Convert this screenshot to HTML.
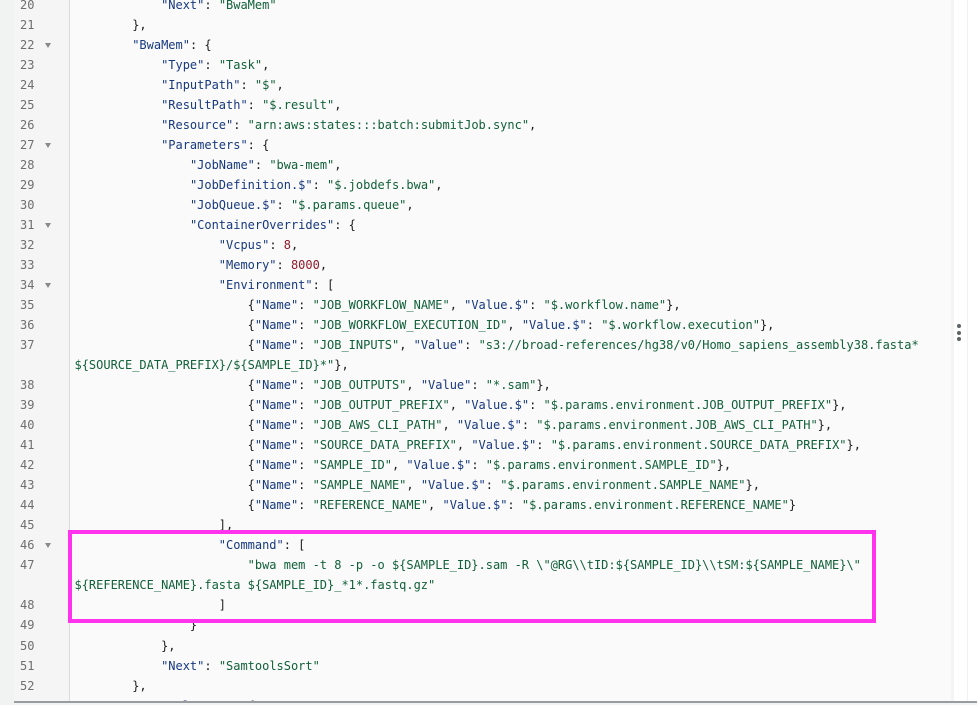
<!DOCTYPE html>
<html>
<head>
<meta charset="utf-8">
<style>
html,body{margin:0;padding:0;background:#fff;}
#page{position:relative;width:977px;height:705px;overflow:hidden;background:#f1f3f3;}
#white{position:absolute;left:953px;top:0;width:14px;height:701px;background:#fff;}
#rail{position:absolute;left:951px;top:0;width:3px;height:701px;background:#f4f4f4;}
#rail2{position:absolute;left:967px;top:0;width:1px;height:701px;background:#f1f1f1;}
#right{position:absolute;left:968px;top:0;width:9px;height:701px;background:#fff;}
#ed{position:absolute;left:14px;top:0;width:937px;height:701px;background:#fafafa;overflow:hidden;}
#gut{position:absolute;left:0;top:0;width:55px;height:701px;background:#f5f5f5;border-right:1px solid #dcdcdc;}
#code{position:absolute;left:0;top:-5px;width:937px;font:12px/20px "DejaVu Sans Mono","Liberation Mono",monospace;color:#1c1c1c;letter-spacing:-0.01px;}
.r{position:relative;height:20.03px;white-space:pre;padding-left:60.5px;}
.r i{position:absolute;left:6px;top:0;font-style:normal;color:#6f6f6f;}
.r.f::after{content:"";position:absolute;left:31px;top:8px;border-left:3px solid transparent;border-right:3px solid transparent;border-top:5px solid #8a8a8a;}
b{font-weight:normal;color:#17397f;}
u{text-decoration:none;color:#12603a;}
em{font-style:normal;color:#8f1a2b;}
#bot{position:absolute;left:14px;top:701px;width:963px;height:2px;background:#979c9e;}
#box{position:absolute;left:68px;top:530px;width:800px;height:85px;border:4px solid #ff33ee;}
.dot{position:absolute;left:957px;width:4px;height:4px;border-radius:50%;background:#5c6266;}
</style>
</head>
<body>
<div id="page">
<div id="white"></div><div id="rail2"></div><div id="right"></div>
<div id="ed">
<div id="gut"></div>
<div id="code">
<div class="r"><i>20</i>            <b>"Next"</b>: <u>"BwaMem"</u></div>
<div class="r"><i>21</i>        },</div>
<div class="r f"><i>22</i>        <b>"BwaMem"</b>: {</div>
<div class="r"><i>23</i>            <b>"Type"</b>: <u>"Task"</u>,</div>
<div class="r"><i>24</i>            <b>"InputPath"</b>: <u>"$"</u>,</div>
<div class="r"><i>25</i>            <b>"ResultPath"</b>: <u>"$.result"</u>,</div>
<div class="r"><i>26</i>            <b>"Resource"</b>: <u>"arn:aws:states:::batch:submitJob.sync"</u>,</div>
<div class="r f"><i>27</i>            <b>"Parameters"</b>: {</div>
<div class="r"><i>28</i>                <b>"JobName"</b>: <u>"bwa-mem"</u>,</div>
<div class="r"><i>29</i>                <b>"JobDefinition.$"</b>: <u>"$.jobdefs.bwa"</u>,</div>
<div class="r"><i>30</i>                <b>"JobQueue.$"</b>: <u>"$.params.queue"</u>,</div>
<div class="r f"><i>31</i>                <b>"ContainerOverrides"</b>: {</div>
<div class="r"><i>32</i>                    <b>"Vcpus"</b>: <em>8</em>,</div>
<div class="r"><i>33</i>                    <b>"Memory"</b>: <em>8000</em>,</div>
<div class="r f"><i>34</i>                    <b>"Environment"</b>: [</div>
<div class="r"><i>35</i>                        {<b>"Name"</b>: <u>"JOB_WORKFLOW_NAME"</u>, <b>"Value.$"</b>: <u>"$.workflow.name"</u>},</div>
<div class="r"><i>36</i>                        {<b>"Name"</b>: <u>"JOB_WORKFLOW_EXECUTION_ID"</u>, <b>"Value.$"</b>: <u>"$.workflow.execution"</u>},</div>
<div class="r"><i>37</i>                        {<b>"Name"</b>: <u>"JOB_INPUTS"</u>, <b>"Value"</b>: <u>"s3://broad-references/hg38/v0/Homo_sapiens_assembly38.fasta*</u></div>
<div class="r"><u>${SOURCE_DATA_PREFIX}/${SAMPLE_ID}*"</u>},</div>
<div class="r"><i>38</i>                        {<b>"Name"</b>: <u>"JOB_OUTPUTS"</u>, <b>"Value"</b>: <u>"*.sam"</u>},</div>
<div class="r"><i>39</i>                        {<b>"Name"</b>: <u>"JOB_OUTPUT_PREFIX"</u>, <b>"Value.$"</b>: <u>"$.params.environment.JOB_OUTPUT_PREFIX"</u>},</div>
<div class="r"><i>40</i>                        {<b>"Name"</b>: <u>"JOB_AWS_CLI_PATH"</u>, <b>"Value.$"</b>: <u>"$.params.environment.JOB_AWS_CLI_PATH"</u>},</div>
<div class="r"><i>41</i>                        {<b>"Name"</b>: <u>"SOURCE_DATA_PREFIX"</u>, <b>"Value.$"</b>: <u>"$.params.environment.SOURCE_DATA_PREFIX"</u>},</div>
<div class="r"><i>42</i>                        {<b>"Name"</b>: <u>"SAMPLE_ID"</u>, <b>"Value.$"</b>: <u>"$.params.environment.SAMPLE_ID"</u>},</div>
<div class="r"><i>43</i>                        {<b>"Name"</b>: <u>"SAMPLE_NAME"</u>, <b>"Value.$"</b>: <u>"$.params.environment.SAMPLE_NAME"</u>},</div>
<div class="r"><i>44</i>                        {<b>"Name"</b>: <u>"REFERENCE_NAME"</u>, <b>"Value.$"</b>: <u>"$.params.environment.REFERENCE_NAME"</u>}</div>
<div class="r"><i>45</i>                    ],</div>
<div class="r f"><i>46</i>                    <b>"Command"</b>: [</div>
<div class="r"><i>47</i>                        <u>"bwa mem -t 8 -p -o ${SAMPLE_ID}.sam -R \"@RG\\tID:${SAMPLE_ID}\\tSM:${SAMPLE_NAME}\"</u></div>
<div class="r"><u>${REFERENCE_NAME}.fasta ${SAMPLE_ID}_*1*.fastq.gz"</u></div>
<div class="r"><i>48</i>                    ]</div>
<div class="r"><i>49</i>                }</div>
<div class="r"><i>50</i>            },</div>
<div class="r"><i>51</i>            <b>"Next"</b>: <u>"SamtoolsSort"</u></div>
<div class="r"><i>52</i>        },</div>
<div class="r f"><i>53</i>        <b>"SamtoolsSort"</b>: {</div>
</div>
</div>
<div id="rail"></div>
<div id="bot"></div>
<div id="box"></div>
<div class="dot" style="top:324px"></div>
<div class="dot" style="top:331px"></div>
<div class="dot" style="top:337px"></div>
</div>
</body>
</html>
